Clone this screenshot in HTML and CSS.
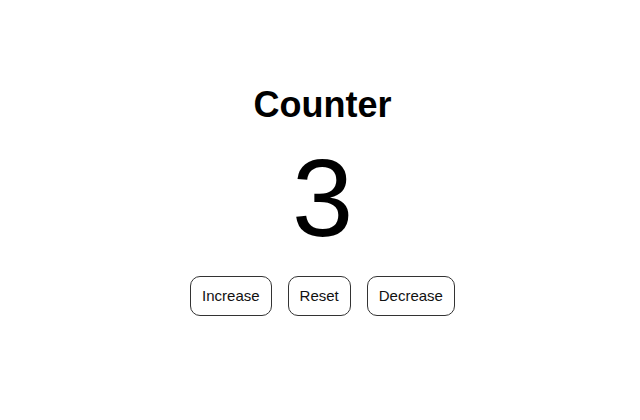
FILE: index.html
```html
<!DOCTYPE html>
<html>
<head>
<meta charset="utf-8">
<link rel="stylesheet" href="styles.css">
</head>
<body>
<main class="counter">
  <h1 class="title">Counter</h1>
  <div class="value">3</div>
  <div class="actions">
    <button class="btn">Increase</button>
    <button class="btn">Reset</button>
    <button class="btn">Decrease</button>
  </div>
</main>
</body>
</html>
```
FILE: styles.css
```css
html, body {
  margin: 0;
  padding: 0;
  background: #ffffff;
}
body {
  font-family: "Liberation Sans", Arial, sans-serif;
  color: #000;
}
.counter {
  display: flex;
  flex-direction: column;
  align-items: center;
  padding-top: 84px;
  padding-left: 5px;
}
.title {
  margin: 0;
  font-size: 36px;
  font-weight: bold;
  line-height: 41px;
}
.value {
  margin-top: 10px;
  font-size: 110px;
  line-height: 126px;
}
.actions {
  display: flex;
  gap: 16px;
  margin-top: 15px;
}
.btn {
  font-family: "Liberation Sans", Arial, sans-serif;
  font-size: 15px;
  line-height: 18px;
  padding: 10px 11px;
  background: #fff;
  color: #111;
  border: 1px solid #333;
  border-radius: 10px;
}
```
